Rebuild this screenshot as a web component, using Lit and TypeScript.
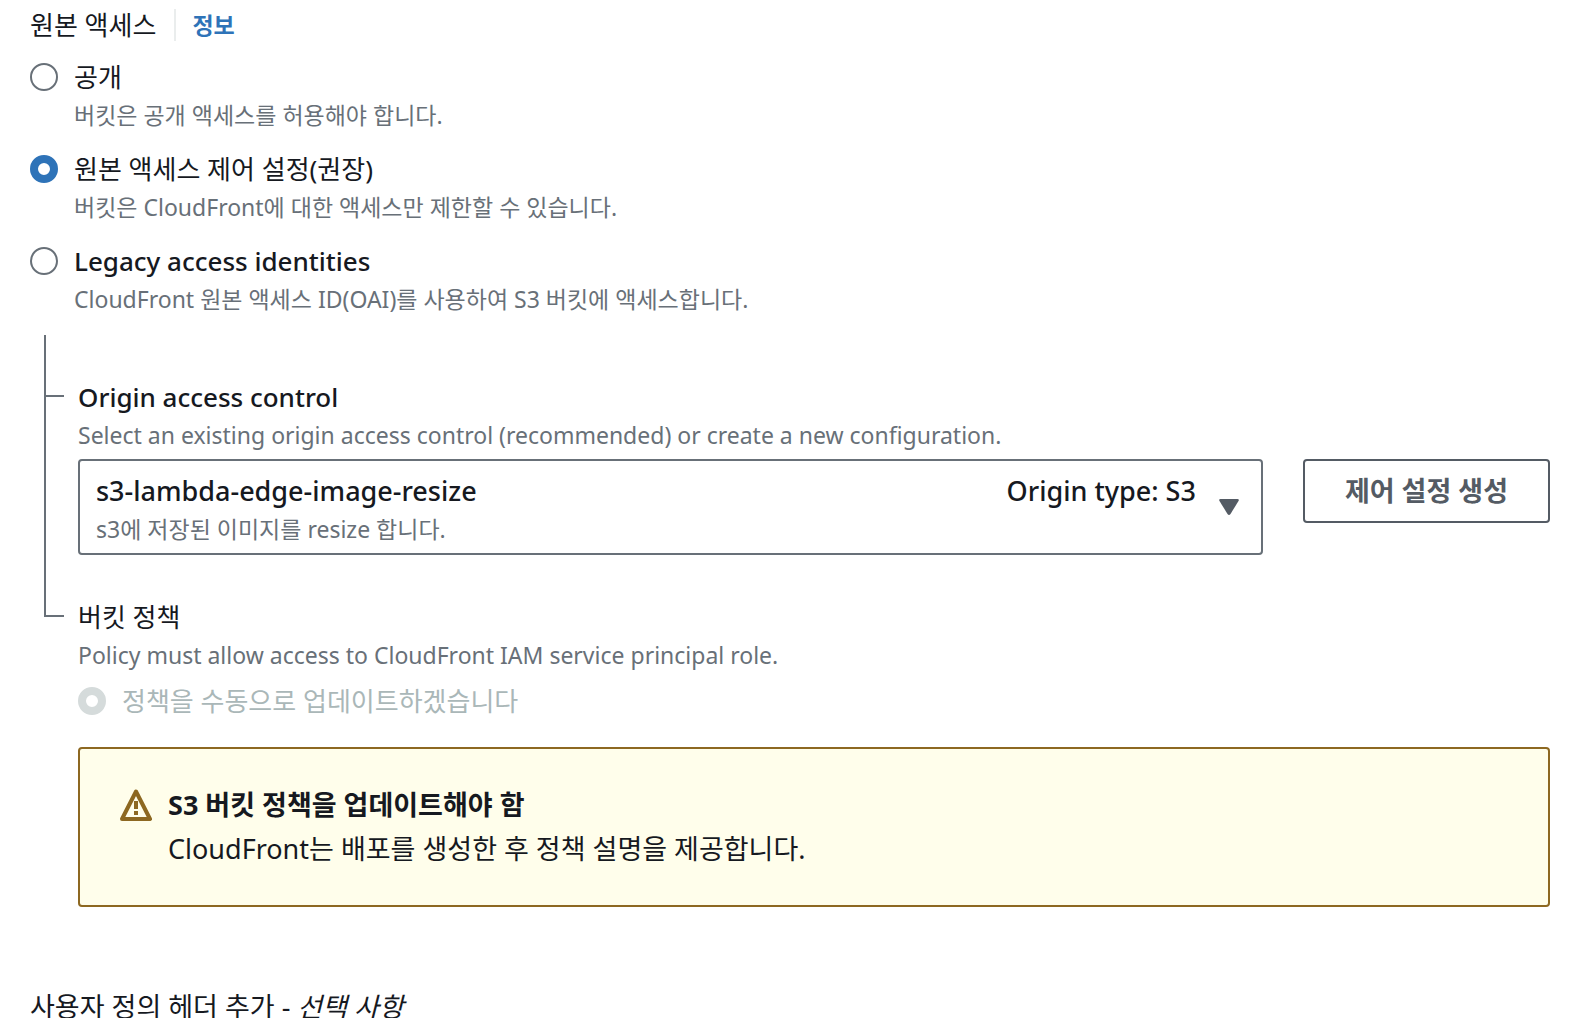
import { LitElement, html, css } from "lit";
import { customElement, state } from "lit/decorators.js";

interface AccessOption {
  value: string;
  lang: string;
  label: string;
  description: string;
}

const ACCESS_OPTIONS: AccessOption[] = [
  { value: "public", lang: "ko", label: "공개", description: "버킷은 공개 액세스를 허용해야 합니다." },
  {
    value: "oac",
    lang: "ko",
    label: "원본 액세스 제어 설정(권장)",
    description: "버킷은 CloudFront에 대한 액세스만 제한할 수 있습니다.",
  },
  {
    value: "oai",
    lang: "en",
    label: "Legacy access identities",
    description: "CloudFront 원본 액세스 ID(OAI)를 사용하여 S3 버킷에 액세스합니다.",
  },
];

@customElement("app-root")
export class AppRoot extends LitElement {
  static styles = css`
    :host {
      display: block;
      box-sizing: border-box;
      height: 100vh;
      overflow-y: auto;
      scrollbar-width: none;
      padding: 5px 30px 0;
      background: #ffffff;
      color: #16191f;
      font-family: "Noto Sans", "Noto Sans CJK KR", sans-serif;
      font-size: 26px;
      line-height: 40px;
    }
    * {
      box-sizing: border-box;
    }
    fieldset {
      margin: 0;
      padding: 0;
      border: 0;
      min-width: 0;
    }
    .heading {
      display: flex;
      align-items: center;
      margin-bottom: 12px;
    }
    .info {
      margin-left: 18px;
      padding-left: 16px;
      border-left: 2px solid #eaeded;
      color: #2e73b8;
      font-size: 23px;
      font-weight: 700;
      line-height: 32px;
      text-decoration: none;
    }
    .options {
      display: flex;
      flex-direction: column;
      gap: 16px;
    }
    .option {
      display: grid;
      grid-template-columns: 28px 1fr;
      column-gap: 16px;
      align-items: center;
    }
    .option .hint {
      grid-column: 2;
    }
    .option label:lang(en),
    .label:lang(en) {
      font-weight: 500;
    }
    .radio {
      appearance: none;
      width: 28px;
      height: 28px;
      margin: 0;
      border: 2px solid #687078;
      border-radius: 50%;
      background: #ffffff;
    }
    .radio:checked {
      border: 8px solid #2e73b8;
    }
    .radio:disabled {
      border-color: #d5dbdb;
    }
    .hint {
      margin: 0;
      color: #687078;
      font-size: 23px;
      font-weight: 400;
      line-height: 36px;
    }
    .tree {
      margin-top: 18px;
      padding-left: 14px;
    }
    .node {
      display: grid;
      grid-template-columns: 20px 1fr;
      column-gap: 14px;
    }
    .branch {
      display: flex;
      flex-direction: column;
    }
    .elbow {
      height: 62px;
      border-left: 2px solid #687078;
      border-bottom: 2px solid #687078;
    }
    .stem {
      flex: 1;
      border-left: 2px solid #687078;
    }
    .body {
      padding-top: 42px;
      min-width: 0;
    }
    .label {
      display: block;
    }
    .body .label + .hint {
      margin-bottom: 6px;
    }
    .controls {
      display: flex;
      align-items: flex-start;
      gap: 40px;
      font-size: 27px;
    }
    .picker {
      display: grid;
      flex: 1;
      min-width: 0;
      font-weight: 500;
    }
    .select {
      grid-area: 1 / 1;
      appearance: none;
      width: 100%;
      margin: 0;
      padding: 10px 64px 42px 16px;
      border: 2px solid #687078;
      border-radius: 4px;
      background: #ffffff;
      color: inherit;
      font: inherit;
      line-height: 40px;
    }
    .detail {
      grid-area: 1 / 1;
      display: grid;
      grid-template-columns: 1fr auto 20px;
      column-gap: 23px;
      padding: 12px 24px 8px 18px;
      pointer-events: none;
      z-index: 1;
    }
    .detail .hint {
      grid-area: 2 / 1;
    }
    .type {
      grid-area: 1 / 2;
    }
    .caret {
      grid-area: 1 / 3 / 3 / 4;
      align-self: start;
      width: 20px;
      height: 16px;
      margin-top: 28px;
      fill: #545b64;
    }
    .button {
      padding: 10px 40px;
      border: 2px solid #545b64;
      border-radius: 4px;
      background: #ffffff;
      color: #545b64;
      font: inherit;
      font-weight: 700;
    }
    .body .option {
      margin-bottom: 26px;
      padding-top: 2px;
    }
    .disabled {
      color: #aab7b8;
    }
    .alert {
      display: grid;
      grid-template-columns: 32px 1fr;
      column-gap: 16px;
      align-items: center;
      padding: 34px 40px;
      border: 2px solid #8d6821;
      border-radius: 4px;
      background: #fffeeb;
      font-size: 27px;
      line-height: 44px;
    }
    .alert-title {
      font-weight: 700;
    }
    .alert-text {
      grid-column: 2;
    }
    .warning {
      width: 32px;
      height: 32px;
      fill: none;
      stroke: #8d6821;
      stroke-width: 4;
      stroke-linejoin: round;
    }
    .custom {
      margin-top: 80px;
      font-size: 27px;
    }
  `;

  @state() private access = "oac";

  render() {
    return html`
      <fieldset aria-labelledby="access-title">
        <div class="heading">
          <span id="access-title">원본 액세스</span>
          <a class="info" href="#info">정보</a>
        </div>
        <div class="options">
          ${ACCESS_OPTIONS.map(
            (o) => html`
              <div class="option">
                <input
                  class="radio"
                  type="radio"
                  name="access"
                  id=${o.value}
                  .checked=${this.access === o.value}
                  aria-describedby="${o.value}-hint"
                  @change=${() => (this.access = o.value)}
                />
                <label for=${o.value} lang=${o.lang}>${o.label}</label>
                <p class="hint" id="${o.value}-hint">${o.description}</p>
              </div>
            `,
          )}
        </div>
      </fieldset>

      <div class="tree">
        <div class="node">
          <div class="branch"><div class="elbow"></div><div class="stem"></div></div>
          <div class="body">
            <label class="label" for="control" lang="en">Origin access control</label>
            <p class="hint">
              Select an existing origin access control (recommended) or create a new configuration.
            </p>
            <div class="controls">
              <div class="picker">
                <select class="select" id="control">
                  <option>s3-lambda-edge-image-resize</option>
                </select>
                <div class="detail">
                  <span class="type">Origin type: S3</span>
                  <p class="hint">s3에 저장된 이미지를 resize 합니다.</p>
                  <svg class="caret" viewBox="0 0 20 16" aria-hidden="true">
                    <path d="M1.500 0H18.500Q20.500 0 19.500 2L11.500 15Q10 17 8.500 15L.5 2Q-.5 0 1.500 0Z" />
                  </svg>
                </div>
              </div>
              <button class="button" type="button">제어 설정 생성</button>
            </div>
          </div>
        </div>

        <div class="node">
          <div class="branch"><div class="elbow"></div></div>
          <div class="body">
            <span class="label" lang="ko">버킷 정책</span>
            <p class="hint">
              Policy must allow access to CloudFront IAM service principal role.
            </p>
            <div class="option">
              <input class="radio" type="radio" name="policy" id="manual" checked disabled />
              <label class="disabled" for="manual" lang="ko">정책을 수동으로 업데이트하겠습니다</label>
            </div>
            <div class="alert" role="status">
              <svg class="warning" viewBox="0 0 32 32" aria-hidden="true">
                <path d="M16 2.500 30 30H2Z" />
                <path d="M16 12v8M16 22v4" />
              </svg>
              <span class="alert-title">S3 버킷 정책을 업데이트해야 함</span>
              <span class="alert-text">CloudFront는 배포를 생성한 후 정책 설명을 제공합니다.</span>
            </div>
          </div>
        </div>
      </div>

      <div class="custom">사용자 정의 헤더 추가 - <em>선택 사항</em></div>
    `;
  }
}
